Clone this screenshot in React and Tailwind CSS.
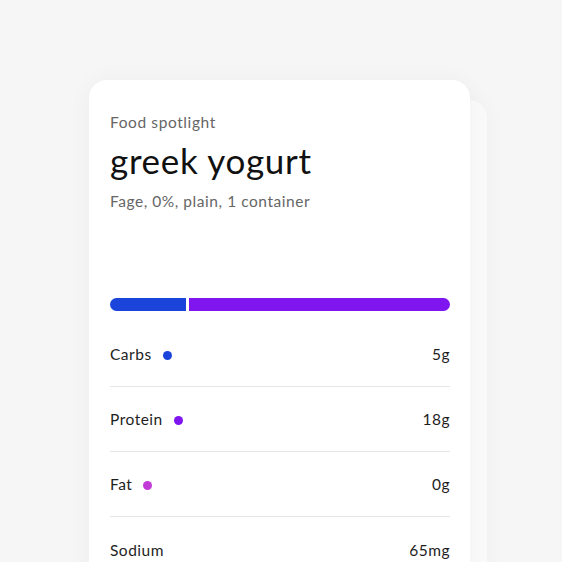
export default function App() {
  const rows = [
    { label: "Carbs", value: "5g", dot: "bg-[#1b44da]" },
    { label: "Protein", value: "18g", dot: "bg-[#7f16f0]" },
    { label: "Fat", value: "0g", dot: "bg-[#c13bd6]" },
    { label: "Sodium", value: "65mg", dot: null },
  ];
  return (
    <div className="w-[562px] h-[562px] overflow-hidden bg-[#f6f6f6] pt-[80px] pl-[89px]" style={{ fontFamily: "Lato, 'Noto Sans', sans-serif" }}>
      <div className="relative w-[381px]">
        <div className="absolute top-[20px] left-[20px] right-[-17px] h-[600px] rounded-[18px] bg-[#fafafa] shadow-[0_0_24px_rgba(0,0,0,0.03)]"></div>
        <div className="relative bg-white rounded-[18px] shadow-[0_0_24px_rgba(0,0,0,0.04)] px-[21px] pt-[32px] pb-[40px] h-[520px]">
          <div className="text-[15.5px] leading-[20px] tracking-[0.6px] text-[#666]">Food spotlight</div>
          <div className="mt-[8px] text-[35px] leading-[40px] tracking-[0.7px] text-[#111]">greek yogurt</div>
          <div className="mt-[11px] text-[15.5px] leading-[20px] tracking-[0.55px] text-[#666]">Fage, 0%, plain, 1 container</div>
          <div className="mt-[87px] flex h-[13px] gap-[3px] w-[340px]">
            <div className="w-[76px] rounded-l-full bg-[#1b44da]"></div>
            <div className="flex-1 rounded-r-full bg-[#7f16f0]"></div>
          </div>
          <div className="w-[340px] mt-[11px]">
            {rows.map((r, i) => (
              <div key={r.label} className={`flex items-center justify-between h-[65px] pt-[2px] ${i < rows.length - 1 ? "border-b border-[#e6e6e6]" : ""}`}>
                <div className="flex items-center gap-[11px] text-[15.5px] tracking-[0.5px] text-[#1e1e1e]">
                  <span>{r.label}</span>
                  {r.dot && <span className={`w-[9px] h-[9px] rounded-full ${r.dot}`}></span>}
                </div>
                <div className="text-[15.5px] tracking-[0.5px] text-[#1e1e1e]">{r.value}</div>
              </div>
            ))}
          </div>
        </div>
      </div>
    </div>
  );
}
